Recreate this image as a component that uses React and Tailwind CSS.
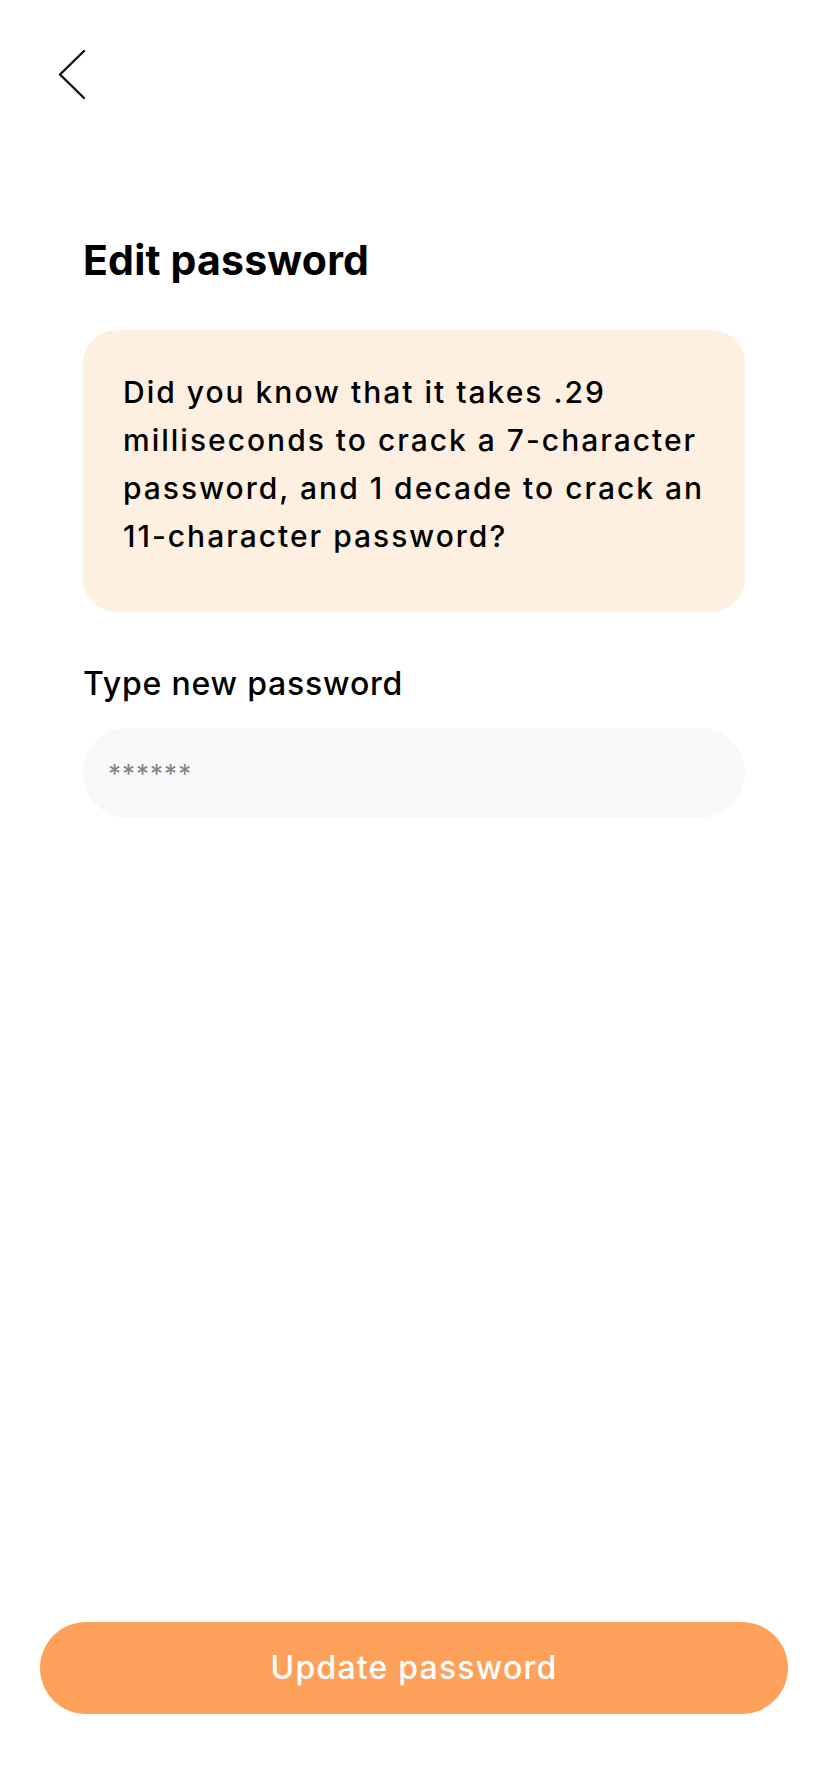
import React, { useState } from 'react';

const BackIcon = () => (
  <svg width="30" height="52" viewBox="0 0 30 52" fill="none">
    <path d="M27 2 L3 25.5 L27 49" stroke="#111" strokeWidth="2.4" strokeLinecap="round" strokeLinejoin="round" />
  </svg>
);

const App = () => {
  const [password, setPassword] = useState('');

  return (
    <div
      className="min-h-[1792px] w-full bg-white flex flex-col"
      style={{ fontFamily: 'Inter, "Noto Sans", sans-serif' }}
    >
      {/* Header */}
      <div className="pt-[49px] pl-[57px]">
        <button className="block">
          <BackIcon />
        </button>
      </div>

      <div className="px-[83px]">
        <h1 className="mt-[135px] text-[41px] leading-[48px] font-bold text-black tracking-[0.2px]">
          Edit password
        </h1>

        {/* Tip box */}
        <div className="mt-[46px] bg-[#fef0e1] rounded-[34px] px-[40px] pt-[38px] pb-[52px]">
          <p className="text-[30px] leading-[48px] font-medium text-black tracking-[2px] whitespace-nowrap">
            Did you know that it takes .29<br />
            milliseconds to crack a 7-character<br />
            password, and 1 decade to crack an<br />
            11-character password?
          </p>
        </div>

        {/* Password field */}
        <label className="block mt-[52px] text-[32px] leading-[40px] font-medium text-black tracking-[0.8px]">
          Type new password
        </label>
        <div className="mt-[24px] h-[90px] rounded-full bg-[#f7f8fa] flex items-center px-[25px]">
          <input
            type="password"
            value={password}
            onChange={(e) => setPassword(e.target.value)}
            placeholder="******"
            className="w-full bg-transparent outline-none text-[26px] text-gray-700 placeholder:text-[#858585] tracking-[1px]"
          />
        </div>
      </div>

      {/* Update button */}
      <div className="mt-auto px-[40px] pb-[78px]">
        <button className="w-full h-[92px] rounded-full bg-[#fea15a] text-white text-[32px] font-medium tracking-[1.2px]">
          Update password
        </button>
      </div>
    </div>
  );
};

export default App;
